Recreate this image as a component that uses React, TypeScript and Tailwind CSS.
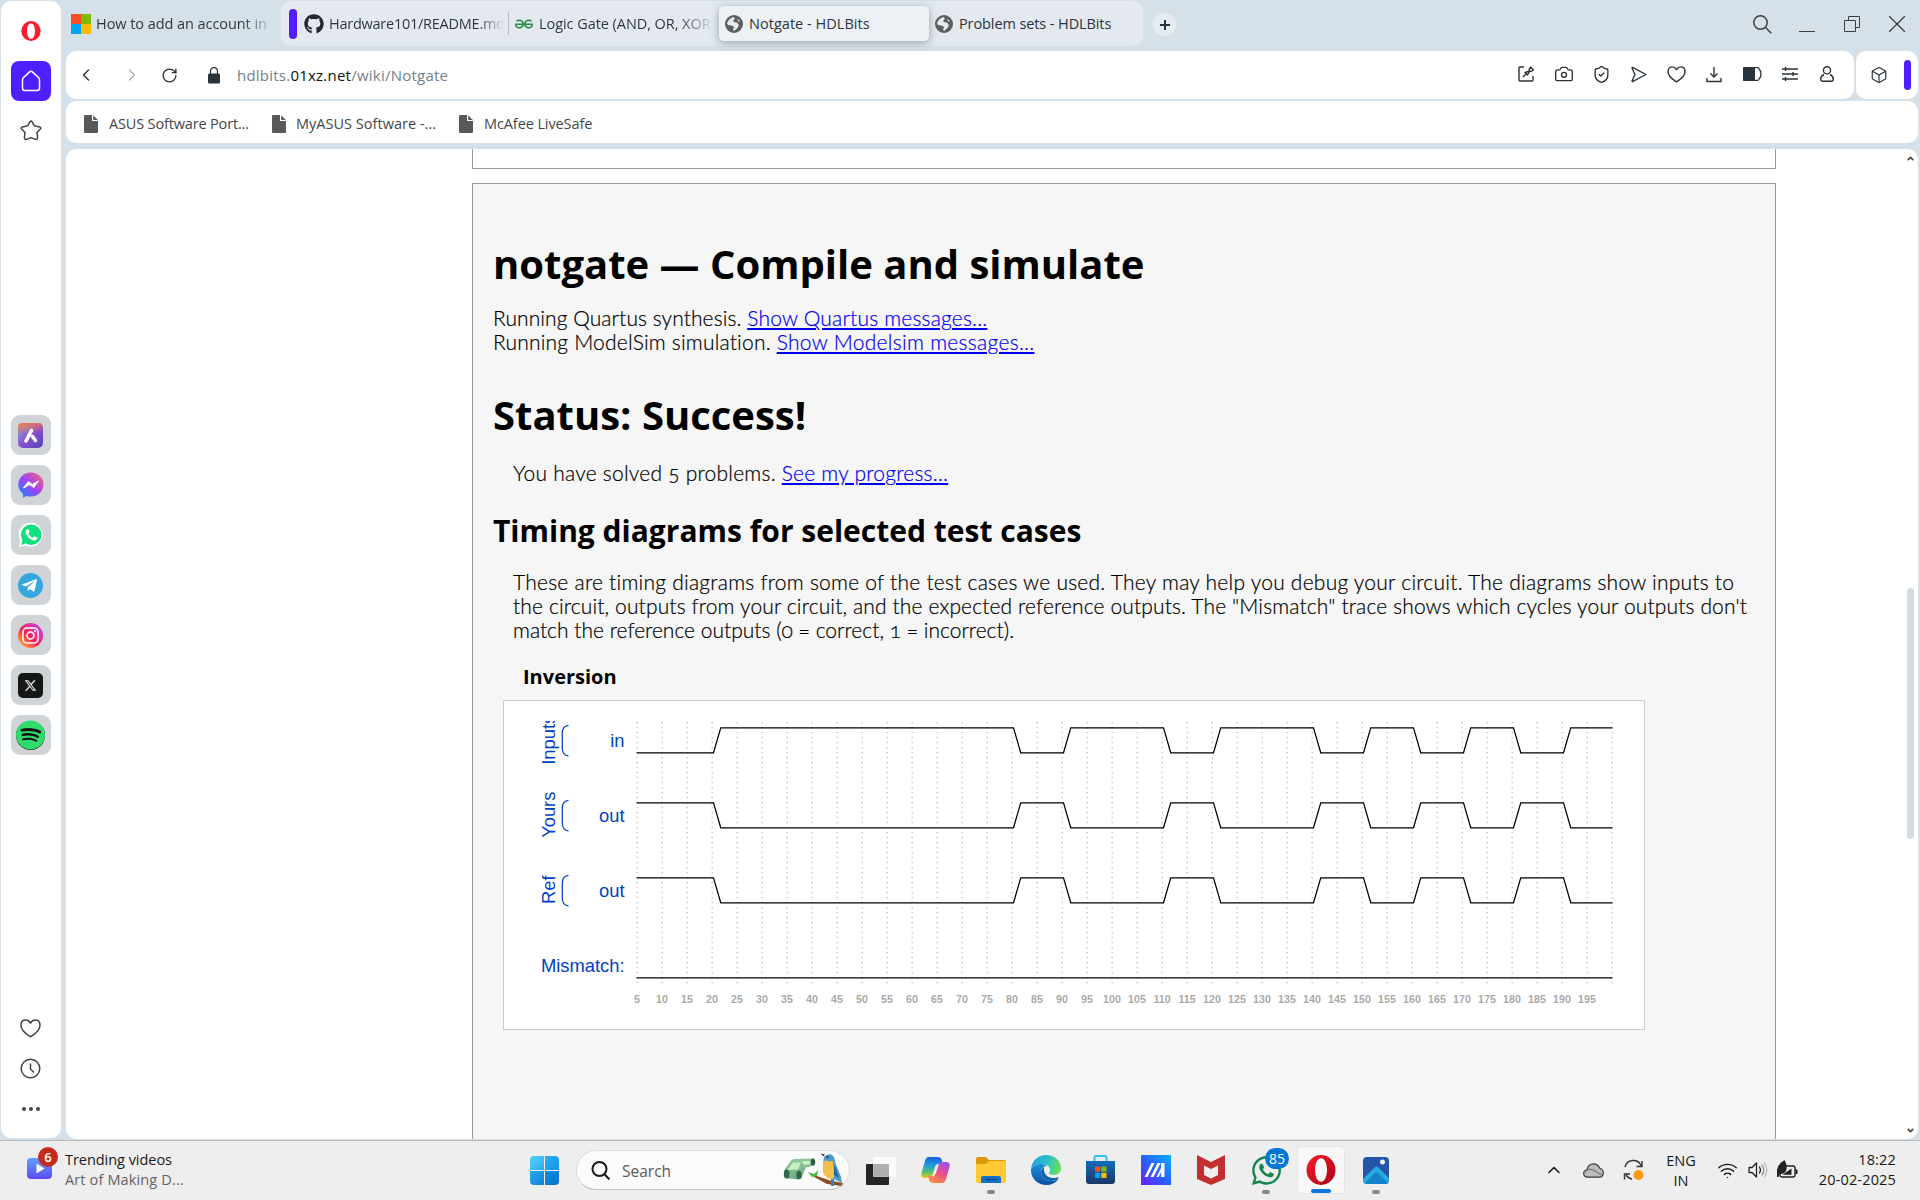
import React from "react";
import {
  ChevronLeft, ChevronRight, RotateCw, Camera, ShieldCheck,
  Box, ChevronUp, Wifi,
} from "lucide-react";
import { FaGithub, FaWhatsapp, FaTelegramPlane, FaInstagram, FaSpotify } from "react-icons/fa";
import { FaXTwitter } from "react-icons/fa6";
import { SiGeeksforgeeks } from "react-icons/si";

const ui = "font-['Open_Sans','Noto_Sans',sans-serif]";

/* ---------- small drawings ---------- */

function OperaRing({ size }: { size: number }) {
  return (
    <svg width={size} height={size} viewBox="0 0 30 30">
      <defs>
        <linearGradient id={`op${size}`} x1="0" y1="0" x2="1" y2="1">
          <stop offset="0" stopColor="#ff1b2d" />
          <stop offset="1" stopColor={size > 24 ? "#a70014" : "#ff1b2d"} />
        </linearGradient>
      </defs>
      <path fillRule="evenodd" fill={`url(#op${size})`} d="M15 0a14.5 15 0 1 0 0 30a14.5 15 0 1 0 0-30zM15 3.2c3.8 0 6 5.4 6 11.800s-2.200 11.800-6 11.800s-6-5.400-6-11.800s2.200-11.800 6-11.800z" />
    </svg>
  );
}

function Globe() {
  return (
    <svg width="18" height="18" viewBox="0 0 18 18" className="shrink-0">
      <circle cx="9" cy="9" r="9" fill="#5c5e60" />
      <path d="M2 8c1.500-3 4-5.500 6.500-6l1.500 1.500-2 2.500 1.500 1.200 2.500.3 1.800 2.500-1 2.800-3.800 3.200-1-1.500 1.200-2.500-2.700-1.500L3 10z" fill="#e6ebf0" />
      <path d="M12 3.500l3 2.500-1.500.8z" fill="#e6ebf0" />
    </svg>
  );
}

function FileIcon() {
  return (
    <svg width="14" height="18" viewBox="0 0 14 18" className="shrink-0">
      <path d="M1 0h7v6h6v11a1 1 0 0 1-1 1H1a1 1 0 0 1-1-1V1a1 1 0 0 1 1-1z" fill="#58595b" />
      <path d="M9.200.2L13.900 5H9.200z" fill="#58595b" />
    </svg>
  );
}

/* ---------- sidebar ---------- */

function Tile({ children }: { children: React.ReactNode }) {
  return <div className="flex size-10 items-center justify-center rounded-[9px] bg-[#d0d4d7]">{children}</div>;
}

function Sidebar() {
  return (
    <div className="ml-px mt-px flex h-[1137px] w-[60px] shrink-0 flex-col items-center rounded-[10px] bg-white pr-px text-[#3d464d]">
      <div className="mt-5 h-5"><OperaRing size={20} /></div>
      <div className="mt-5 flex size-10 items-center justify-center rounded-lg bg-[#4f1fff]">
        <svg width="20" height="22" viewBox="0 0 20 22" fill="none" stroke="#fff" strokeWidth="1.500" strokeLinejoin="round">
          <path d="M8.900 1.600Q10 .7 11.100 1.600L17.500 7.500Q18.500 8.500 18.500 10V18Q18.500 20.500 16 20.500H4Q1.500 20.500 1.500 18V10Q1.500 8.500 2.500 7.500Z" />
        </svg>
      </div>
      <svg className="mt-[19px]" width="22" height="21" viewBox="0 0 22 21" fill="none" stroke="currentColor" strokeWidth="1.500" strokeLinejoin="round">
        <path d="M9.900 1.800Q11 .4 12.100 1.800L14.200 5.700L19.600 6.900Q21.600 7.500 20.300 9L17 12.400L17.600 17.600Q17.600 20 15.400 19.400L11 17.600L6.600 19.400Q4.400 20 4.400 17.600L5 12.400L1.700 9Q.4 7.500 2.400 6.900L7.800 5.700Z" />
      </svg>
      <div className="mt-[274px] flex flex-col gap-2.5">
        <Tile>
          <span className="flex size-[25px] items-center justify-center rounded-[5px] bg-linear-135 from-[#58b5ea] via-[#8a4fd0] to-[#4b46b8]">
            <svg width="25" height="25" viewBox="0 0 25 25">
              <defs><linearGradient id="ar" x1=".4" y1="0" x2=".6" y2="1"><stop stopColor="#ff7040" stopOpacity=".85" /><stop offset=".45" stopColor="#ff7040" stopOpacity="0" /></linearGradient></defs>
              <rect width="25" height="25" rx="4" fill="url(#ar)" />
              <path d="M13.500 7.500L8 18M14.500 13.500L17.500 17.500" stroke="#fff" strokeWidth="3.600" strokeLinecap="round" />
            </svg>
          </span>
        </Tile>
        <Tile>
          <svg width="26" height="26" viewBox="0 0 26 26">
            <defs><linearGradient id="ms" x1="0" y1="1" x2="1" y2="0"><stop stopColor="#0a8cff" /><stop offset=".5" stopColor="#a043f5" /><stop offset="1" stopColor="#ff6968" /></linearGradient></defs>
            <path d="M13 .5a12.500 12 0 0 1 0 24c-1.500 0-2.800-.2-4-.6L5 25.500V22A12 12 0 0 1 13 .5z" fill="url(#ms)" />
            <path d="M5.500 16L10.300 9.500L14.300 12.500L20.500 9L15.700 15.500L11.700 12.500Z" fill="#fff" stroke="#fff" strokeLinejoin="round" />
          </svg>
        </Tile>
        <Tile>
          <svg width="26" height="26" viewBox="0 0 26 26">
            <path d="M1 25L2.500 19A12 12 0 1 1 7.500 23.500Z" fill="#fff" />
            <circle cx="13.200" cy="12.800" r="10.300" fill="#12e07c" />
            <path d="M3 23l1.500-5 3.500 3.500z" fill="#12e07c" />
            <path d="M9.500 7.200c-1.500.5-2.300 2-1.700 4 1.200 3.600 4.200 6.400 8 7.200 2 .3 3.300-.7 3.600-2.600l-3-1.600-1.600 1.500c-2-.8-3.500-2.300-4.300-4.200l1.100-1.300-1-2.900z" fill="#fff" />
          </svg>
        </Tile>
        <Tile>
          <span className="flex size-[25px] items-center justify-center rounded-full bg-[#35a6de] pr-0.5 text-white"><FaTelegramPlane size={17} /></span>
        </Tile>
        <Tile>
          <span className="flex size-[25px] items-center justify-center rounded-full bg-linear-to-tr from-[#ffb020] via-[#f9134f] via-45% to-[#c01cff] text-white"><FaInstagram size={19} /></span>
        </Tile>
        <Tile>
          <span className="flex size-[25px] items-center justify-center rounded-[5px] bg-[#141716] text-[#e8e8e8]"><FaXTwitter size={13} /></span>
        </Tile>
        <Tile>
          <span className="flex size-[29px] items-center justify-center rounded-full bg-[#111] text-[#2edb6b]"><FaSpotify size={30} /></span>
        </Tile>
      </div>
      <svg className="mt-[264px]" width="21" height="19" viewBox="0 0 21 19" fill="none" stroke="currentColor" strokeWidth="1.500" strokeLinejoin="round">
        <path d="M10.500 17.800C8 16 1 12.500 1 6.200C1 3 3 1 5.700 1C8 1 9.500 2.300 10.500 4C11.500 2.300 13 1 15.300 1C18 1 20 3 20 6.200C20 12.500 13 16 10.500 17.800Z" />
      </svg>
      <svg className="mt-[20px]" width="21" height="21" viewBox="0 0 21 21" fill="none" stroke="currentColor" strokeWidth="1.500" strokeLinecap="round">
        <circle cx="10.500" cy="10.500" r="9.300" /><path d="M10.500 6v5l3 3" />
      </svg>
      <div className="mt-[28px] flex gap-[3px]">
        <i className="size-1 rounded-full bg-[#3d464d]" /><i className="size-1 rounded-full bg-[#3d464d]" /><i className="size-1 rounded-full bg-[#3d464d]" />
      </div>
    </div>
  );
}

/* ---------- tab strip ---------- */

function TabStrip() {
  return (
    <div className={`flex h-[51px] text-[14.500px] leading-5 tracking-[-0.06px] text-[#2b343b] ${ui}`}>
      <div className="flex w-[215px] items-start pl-[5px] pt-3.5">
        <div className="grid size-5 shrink-0 grid-cols-2">
          <i className="bg-[#f25022]" /><i className="bg-[#7fba00]" /><i className="bg-[#00a4ef]" /><i className="bg-[#ffb900]" />
        </div>
        <div className="ml-[5px] w-[170px] overflow-hidden whitespace-nowrap bg-linear-to-r from-[#2b343b] from-85% to-[#a9b3bb] bg-clip-text text-transparent">How to add an account in</div>
      </div>
      <div className="mt-px flex h-[45px] w-[862px] items-center rounded-[10px] bg-[#e3e9ef]">
        <div className="ml-2 h-[30px] w-2 shrink-0 rounded-full bg-[#4f1fff]" />
        <FaGithub size={20} className="ml-[7px] shrink-0 text-[#24292f]" />
        <div className="ml-[5px] mt-px w-[174px] shrink-0 overflow-hidden whitespace-nowrap bg-linear-to-r from-[#2b343b] from-85% to-[#d5dce2] bg-clip-text tracking-[-0.25px] text-transparent">Hardware101/README.md</div>
        <div className="ml-[5px] h-[23px] w-px shrink-0 bg-[#b4bbc1]" />
        <SiGeeksforgeeks size={18} className="ml-[6px] shrink-0 text-[#2f8d46]" />
        <div className="ml-1.5 mt-px w-[173px] shrink-0 overflow-hidden whitespace-nowrap bg-linear-to-r from-[#2b343b] from-80% to-[#d5dce2] bg-clip-text text-transparent">Logic Gate (AND, OR, XOR</div>
        <div className="ml-[7px] flex h-[35px] w-[210px] shrink-0 items-center gap-1.5 rounded-[5px] bg-[#edf1f6] pl-1.5 shadow-[0_2px_8px_rgba(60,75,90,0.45)]">
          <Globe /><span className="mt-px whitespace-nowrap tracking-[0.03px]">Notgate - HDLBits</span>
        </div>
        <div className="ml-1.5 flex items-center gap-1.5"><Globe /><span className="mt-px whitespace-nowrap tracking-[-0.1px]">Problem sets - HDLBits</span></div>
      </div>
      <div className="ml-2.5 mt-[13px] flex size-[23px] items-center justify-center rounded-full bg-[#e5ebf1]">
        <svg width="10" height="10" viewBox="0 0 10 10" stroke="#2b343b" strokeWidth="2"><path d="M5 0v10M0 5h10" /></svg>
      </div>
      <div className="ml-auto mr-[13px] flex h-12 items-center text-[#3a3f44]">
        <svg width="19" height="19" viewBox="0 0 19 19" fill="none" stroke="currentColor" strokeWidth="1.500"><circle cx="7.500" cy="7.500" r="6.700" /><path d="M12.300 12.300l6 6" /></svg>
        <svg className="ml-[27px]" width="16" height="16" viewBox="0 0 16 16" stroke="currentColor"><path d="M0 15.500h16" /></svg>
        <svg className="ml-[29px]" width="16" height="16" viewBox="0 0 16 16" fill="none" stroke="currentColor"><path d="M.5 4.500h11v11H.5zM4.500 4.500v-4h11v11h-4" /></svg>
        <svg className="ml-[29px]" width="16" height="16" viewBox="0 0 16 16" stroke="currentColor" strokeWidth="1.300"><path d="M0 0l16 16M16 0L0 16" /></svg>
      </div>
    </div>
  );
}

/* ---------- address and bookmark bars ---------- */

function Toolbar() {
  return (
    <div className="flex h-12 gap-[2px] text-[#2b343b]">
      <div className="flex w-[1788px] items-center rounded-[10px] bg-white">
        <ChevronLeft size={20} strokeWidth={1.7} className="ml-[10px]" />
        <ChevronRight size={20} strokeWidth={1.5} className="ml-[26px] text-[#a9b0b6]" />
        <RotateCw size={17} strokeWidth={1.9} className="ml-[19px]" />
        <svg className="ml-[30px]" width="12" height="17" viewBox="0 0 12 17"><rect y="6.500" width="12" height="10" rx="1.500" fill="#2b343b" /><path d="M2.500 7V4a3.500 3.500 0 0 1 7 0v3" fill="none" stroke="#2b343b" strokeWidth="1.300" /></svg>
        <div className={`ml-[17px] whitespace-nowrap text-[15px] leading-5 tracking-[0.23px] text-[#74818c] ${ui}`}>
          hdlbits.<span className="text-[#0c1013]">01xz.net</span>/wiki/Notgate
        </div>
        <div className="ml-auto mr-[8px] flex items-center">
          {[
            <svg key="a" width="18" height="18" viewBox="0 0 18 18" fill="none" stroke="currentColor" strokeWidth="1.400" strokeLinejoin="round"><path d="M7 2H3Q2 2 2 3V15Q2 16 3 16H15Q16 16 16 15V11" /><path d="M6 12L9 9M7.500 7L11 10.500M8.500 7.500L12.500 6L12 4.500L13.500 2L16.500 5L14 6.500L12.500 6M10.500 10L12.500 6.500" /></svg>,
            <Camera key="b" size={20} strokeWidth={1.6} />,
            <ShieldCheck key="c" size={19} strokeWidth={1.7} />,
            <svg key="d" width="16" height="17" viewBox="0 0 16 17" fill="none" stroke="currentColor" strokeWidth="1.400" strokeLinejoin="round"><path d="M1.500 1.300L15 8.500L1.500 15.700Q.8 15.500 1.200 14.500L4 8.500L1.200 2.500Q.8 1.500 1.500 1.300Z" /></svg>,
            <svg key="e" width="19" height="17" viewBox="0 0 21 19" fill="none" stroke="currentColor" strokeWidth="1.600" strokeLinejoin="round"><path d="M10.500 17.800C8 16 1 12.500 1 6.200C1 3 3 1 5.700 1C8 1 9.500 2.300 10.500 4C11.500 2.300 13 1 15.300 1C18 1 20 3 20 6.200C20 12.500 13 16 10.500 17.800Z" /></svg>,
            <svg key="f" width="16" height="17" viewBox="0 0 16 17" fill="none" stroke="currentColor" strokeWidth="1.400"><path d="M8 1v10M4.500 7.500L8 11l3.500-3.500M1 12v3.500h14V12" /></svg>,
            <svg key="g" width="19" height="14" viewBox="0 0 19 14"><path d="M1 .7H14.500Q16 .7 16.300 2.500L17.800 4.500V9.500L16.300 11.500Q16 13.300 14.500 13.300H1z" fill="none" stroke="currentColor" strokeWidth="1.300" /><rect width="12" height="14" rx="1.500" fill="currentColor" /></svg>,
            <svg key="h" width="16" height="14" viewBox="0 0 16 14" stroke="currentColor" strokeWidth="1.400"><path d="M0 2h16M0 7h16M0 12h16M3.500 0v4M11 5v4M3.500 10v4" /></svg>,
            <svg key="i" width="14" height="16" viewBox="0 0 14 16" fill="none" stroke="currentColor" strokeWidth="1.400"><circle cx="7" cy="4.300" r="3.600" /><path d="M4 8.500C2 9.500.7 11 .7 13Q.7 15.300 3 15.300H11Q13.300 15.300 13.300 13C13.300 11 12 9.500 10 8.500" /></svg>,
          ].map((icon, i) => (
            <span key={i} className="flex h-[22px] w-[37.600px] items-center justify-center pb-0.5">{icon}</span>
          ))}
        </div>
      </div>
      <div className="flex w-[62px] items-center rounded-[10px] bg-white">
        <Box size={18} strokeWidth={1.6} className="ml-[14px]" />
        <div className="ml-[16px] h-[30px] w-[7px] rounded-full bg-[#4f1fff]" />
      </div>
    </div>
  );
}

function Bookmarks() {
  return (
    <div className={`mt-[2px] flex h-[42px] items-center rounded-[10px] bg-white pl-[18px] pt-1 text-[14.500px] leading-5 text-[#3f474d] ${ui}`}>
      <div className="flex w-[188px] items-center gap-[11px]"><FileIcon /><span className="tracking-[-0.16px]">ASUS Software Port...</span></div>
      <div className="flex w-[187px] items-center gap-[10px]"><FileIcon /><span className="tracking-[0.02px]">MyASUS Software -...</span></div>
      <div className="flex items-center gap-[11px]"><FileIcon /><span className="tracking-[-0.1px]">McAfee LiveSafe</span></div>
    </div>
  );
}

/* ---------- timing diagram ---------- */

const X0 = 133;
const STEP = 25;
const INPUT_EDGES = [20, 80, 90, 110, 120, 140, 150, 160, 170, 180, 190];
const toX = (t: number) => X0 + ((t - 5) / 5) * STEP;

function wavePath(high: boolean, top: number, edges: number[]) {
  let level = high;
  let d = "";
  const y = (h: boolean) => (h ? top : top + 25);
  for (let t = 5; t < 200; t += 2.5) {
    const a = toX(t);
    const b = toX(t + 2.5);
    if (edges.includes(t)) {
      d += `M${a},${y(level)}h1.500L${a + 8.75},${y(!level)}H${b}`;
      level = !level;
    } else {
      d += `M${a},${y(level)}H${b}`;
    }
  }
  return d;
}

function TimingDiagram() {
  const ticks = Array.from({ length: 40 }, (_, i) => 5 + i * 5);
  const groups = [
    { name: "Inputs", signal: "in", top: 26.75, high: false },
    { name: "Yours", signal: "out", top: 101.75, high: true },
    { name: "Ref", signal: "out", top: 176.75, high: true },
  ];
  return (
    <svg width="1140" height="328" viewBox="0 0 1140 328" className="block font-['Liberation_Sans',Arial,sans-serif]">
      <defs><clipPath id="lane"><rect x="0" y="20" width="1140" height="308" /></clipPath></defs>
      <g clipPath="url(#lane)">
        {ticks.map((t) => (
          <line key={t} x1={toX(t) + 0.2} x2={toX(t) + 0.2} y1="20" y2="283" stroke="#b8b8b8" strokeWidth="1.250" strokeDasharray="1.250 3.750" strokeDashoffset="-1" />
        ))}
        {groups.map((g) => (
          <g key={g.name}>
            <text transform={`translate(50.500 ${g.top + 12}) rotate(-90)`} textAnchor="middle" fontSize="18.330" fill="#0041c4">{g.name}</text>
            <path d={`M64.500,${g.top - 2.5}c-4,0 -6.200,4 -6.200,7.500v15.500c0,4 2.200,7.500 6.200,7.500`} fill="none" stroke="#0041c4" strokeWidth="1.250" />
            <text x="120.500" y={g.top + 19.2} textAnchor="end" fontSize="18.330" fill="#0041c4">{g.signal}</text>
            <path d={wavePath(g.high, g.top, INPUT_EDGES)} fill="none" stroke="#000" strokeWidth="1.250" strokeLinecap="round" />
          </g>
        ))}
        <text x="120.500" y="271" textAnchor="end" fontSize="18.330" fill="#0041c4">Mismatch:</text>
        <path d={wavePath(false, 251.75, [])} fill="none" stroke="#000" strokeWidth="1.250" strokeLinecap="round" />
        {ticks.slice(0, 39).map((t) => (
          <text key={t} x={toX(t)} y="302" textAnchor="middle" fontSize="10.670" fontWeight="700" fill="#aaa">{t}</text>
        ))}
      </g>
    </svg>
  );
}

/* ---------- web page ---------- */

const link = "text-[#0000ee] underline decoration-[1.500px] underline-offset-2";

function WebPage() {
  return (
    <div className="mt-[6px] flex h-[990px] shrink-0 overflow-hidden rounded-[10px] bg-white text-black">
      <div className="ml-[406px] flex w-[1304px] flex-col">
        <div className="h-5 shrink-0 border border-t-0 border-[#999]" />
        <div className="mt-[14px] grow border border-b-0 border-[#999] bg-[#f6f6f6] px-5 font-['Lato',sans-serif] text-[21px] font-light oldstyle-nums leading-6 [font-variant-ligatures:none]">
          <h1 className="mt-[53px] whitespace-nowrap font-['Open_Sans',sans-serif] text-[40px] font-bold leading-[54px]">notgate — Compile and simulate</h1>
          <div className="mt-[15px] whitespace-nowrap tracking-[0.08px] [-webkit-text-stroke:0.2px]">Running Quartus synthesis. <span className={`tracking-[0.2px] ${link}`}>Show Quartus messages...</span></div>
          <div className="whitespace-nowrap tracking-[0.2px] [-webkit-text-stroke:0.2px]">Running ModelSim simulation. <span className={`tracking-[0.3px] ${link}`}>Show Modelsim messages...</span></div>
          <h1 className="mt-[34px] whitespace-nowrap font-['Open_Sans',sans-serif] text-[40px] font-bold leading-[54px]">Status: Success!</h1>
          <p className="ml-5 mt-[19px] whitespace-nowrap tracking-[0.23px] [-webkit-text-stroke:0.2px]">You have solved 5 problems. <span className={link}>See my progress...</span></p>
          <h2 className="mt-[25px] whitespace-nowrap font-['Open_Sans',sans-serif] text-[30px] font-bold leading-[41px]">Timing diagrams for selected test cases</h2>
          <p className="ml-5 mt-[19px] whitespace-nowrap [-webkit-text-stroke:0.2px]">
            <span className="block tracking-[0.24px]">These are timing diagrams from some of the test cases we used. They may help you debug your circuit. The diagrams show inputs to</span>
            <span className="block tracking-[0.13px]">the circuit, outputs from your circuit, and the expected reference outputs. The "Mismatch" trace shows which cycles your outputs don't</span>
            <span className="block">match the reference outputs (0 = correct, 1 = incorrect).</span>
          </p>
          <h3 className="ml-[30px] mt-[21px] font-['Open_Sans',sans-serif] text-[20px] font-bold leading-[27px]">Inversion</h3>
          <div className="ml-[10px] mt-[10px] w-[1142px] border border-[#ccc] bg-white lining-nums"><TimingDiagram /></div>
        </div>
      </div>
      <div className="ml-auto mr-[3px] flex w-[9px] flex-col items-center justify-between pb-1 pt-[5px] text-[#505050]">
        <ChevronUp size={9} strokeWidth={5} />
        <div className="mt-[137px] h-[251px] w-[7px] rounded-full bg-[#d2dce4]" />
        <ChevronUp size={9} strokeWidth={5} className="rotate-180" />
      </div>
    </div>
  );
}

/* ---------- taskbar ---------- */

function Slot({ w, mark, children }: { w: string; mark?: boolean; children: React.ReactNode }) {
  return (
    <div className={`relative flex h-12 shrink-0 items-center justify-center ${w}`}>
      {children}
      {mark && <span className="absolute bottom-0 left-1/2 h-1 w-2 -translate-x-1/2 rounded-full bg-[#868686]" />}
    </div>
  );
}

function Taskbar() {
  return (
    <div className={`flex h-[60px] items-start border-t border-[#b4b8bc] bg-[#eeeeee] pt-[5px] text-[14.500px] leading-5 text-[#1a1a1a] ${ui}`}>
      <div className="flex w-[520px] shrink-0 pl-[27px]">
        <div className="relative mt-[11px] h-[23px] w-[25px]">
          <svg width="25" height="23" viewBox="0 0 25 23"><defs><linearGradient id="tv" x1="0" y1="0" x2="0" y2="1"><stop stopColor="#60a0ff" /><stop offset="1" stopColor="#5b4cf0" /></linearGradient></defs><rect y="1" width="25" height="21" rx="4" fill="url(#tv)" /><path d="M9.500 6.500l8 5-8 5z" fill="#fff" /></svg>
          <span className="absolute -top-[10px] left-[11px] flex size-5 items-center justify-center rounded-full bg-[#c42b1c] text-[13px] font-semibold text-white">6</span>
        </div>
        <div className="ml-[13px] mt-1 whitespace-nowrap"><div className="tracking-[-0.04px]">Trending videos</div><div className="tracking-[0.14px] text-[#636363]">Art of Making D...</div></div>
      </div>
      <Slot w="w-[49px]">
        <div className="grid size-[29px] grid-cols-2 gap-px">
          <i className="rounded-tl-sm bg-linear-135 from-[#52d0fb] to-[#2aaef0]" /><i className="rounded-tr-sm bg-linear-135 from-[#2fb2f2] to-[#1590e2]" /><i className="rounded-bl-sm bg-linear-135 from-[#2aa8ee] to-[#0c84da]" /><i className="rounded-br-sm bg-linear-135 from-[#1490e2] to-[#0070cc]" />
        </div>
      </Slot>
      <div className="ml-[7px] mt-1 flex h-10 w-[274px] shrink-0 items-center rounded-full border border-[#dcdcdc] border-b-[#c4c4c4] bg-[#fbfbfb] pl-[14px]">
        <svg width="19" height="19" viewBox="0 0 19 19" fill="none" stroke="currentColor" strokeWidth="2" strokeLinecap="round"><circle cx="8.500" cy="8" r="7" /><path d="M13.500 13.200l4.300 4.500" /></svg>
        <span className="ml-[12px] mt-px text-[15.500px] text-[#5a5a5a]">Search</span>
        <svg className="ml-auto mr-[5px]" width="62" height="34" viewBox="0 0 62 34">
          <defs>
            <linearGradient id="bn" x1="0" y1="0" x2="0" y2="1"><stop stopColor="#8fc79a" /><stop offset="1" stopColor="#6fae85" /></linearGradient>
          </defs>
          <path d="M2.500 17L9 7.500Q11 5.500 14 6L29 5.500Q34 7 32 12.500L24 14.500L19.500 24.500Q17 27.500 13 26L5 25.500Q1 22 2.500 17z" fill="url(#bn)" />
          <path d="M5 17L11 9.500h8l-3 7z M20 8h8v3l-6 1z" fill="#c8f0c4" />
          <ellipse cx="4.600" cy="21" rx="2.800" ry="4.500" fill="#2f6a4c" /><ellipse cx="17" cy="22" rx="2.800" ry="4.300" fill="#2f6a4c" /><ellipse cx="31" cy="9" rx="2.200" ry="3.600" fill="#2f5a48" />
          <path d="M28 21l10 3 10 3.500 13 2.500-2 3-14-2-11-6z" fill="#8a4e24" />
          <path d="M26 19l6 2 4-4-1 6-5 1z" fill="#4db83f" />
          <path d="M42 4Q46 0 50 2Q53 4 53 9L59 24L60 30L52 26L44 21Q40 12 42 4z" fill="#4a9cd0" />
          <path d="M50 8l4 8 3 9-6-4z" fill="#25639c" />
          <path d="M43 7Q47 9 51 8Q53 17 51.500 26Q44 27 41 19.500Q40 13 43 7z" fill="#f0c050" />
          <path d="M41.500 3.500L38.500 .5L43 1.500z" fill="#4a3a30" /><circle cx="45.500" cy="4" r="1.100" fill="#202830" />
          <path d="M49 26v7l3 0v-7z" fill="#3f7fb0" />
        </svg>
      </div>
      <Slot w="ml-[9px] w-[43px]">
        <svg width="30" height="29" viewBox="0 0 30 29"><rect y="8" width="23" height="21" rx="1" fill="#262626" /><rect x="7" y="1" width="23" height="20" rx="1" fill="#fff" fillOpacity=".75" /><rect x="7.500" y="8" width="15.500" height="12.500" fill="#b0b0b0" /></svg>
      </Slot>
      <Slot w="ml-[9px] w-[48px]">
        <svg width="29" height="26" viewBox="0 0 29 26">
          <defs>
            <linearGradient id="ca" x1=".3" y1="0" x2=".3" y2="1"><stop stopColor="#1b60e0" /><stop offset=".4" stopColor="#1f9ae0" /><stop offset=".7" stopColor="#4fc070" /><stop offset="1" stopColor="#f0c818" /></linearGradient>
            <linearGradient id="cb" x1=".8" y1="0" x2=".3" y2="1"><stop stopColor="#9a50f0" /><stop offset=".5" stopColor="#e8508a" /><stop offset="1" stopColor="#ff9040" /></linearGradient>
          </defs>
          <path d="M8 0H17Q20 0 21 3.500L22 7H17.500Q15 7 14 10L11.500 18Q10.500 21 7.500 21H3.500Q-.5 20.500 .5 16L4 4Q5 0 8 0z" fill="url(#ca)" />
          <path d="M21 26H12Q9 26 8 22.500L7 19H11.500Q14 19 15 16L17.500 8Q18.500 5 21.500 5H25.500Q29.500 5.500 28.500 10L25 22Q24 26 21 26z" fill="url(#cb)" />
          <path d="M17 7L12.500 20H11.500L15 8.500z" fill="#eee" />
        </svg>
      </Slot>
      <Slot w="ml-[8px] w-[48px]" mark>
        <svg width="30" height="27" viewBox="0 0 30 27"><path d="M0 2q0-2 2-2h8l3 3h15q2 0 2 2v5H0z" fill="#dc9a0a" /><path d="M0 7h10l3-3h15q2 0 2 2v18q0 2-2 2H2q-2 0-2-2z" fill="#ffc933" /><path d="M5 26v-5q0-2 2-2h16q2 0 2 2v5z" fill="#1273c6" /><path d="M9 22.500h12" stroke="#0a4c8c" strokeWidth="1.500" /></svg>
      </Slot>
      <Slot w="ml-[7px] w-[48px]">
        <svg width="30" height="30" viewBox="0 0 30 30">
          <defs>
            <linearGradient id="ea" x1="0" y1="0" x2="1" y2=".2"><stop stopColor="#1e9be0" /><stop offset=".6" stopColor="#2cc3c8" /><stop offset="1" stopColor="#62dc62" /></linearGradient>
            <linearGradient id="eb" x1="0" y1="0" x2="0" y2="1"><stop stopColor="#1b8fdc" /><stop offset="1" stopColor="#0c50a0" /></linearGradient>
          </defs>
          <path d="M0 14C1 5 8 0 15 0c9 0 15 6 15 13 0 4-3 7-7 7-3 0-5-1-5-2 0-1 1-1 1-3 0-4-4-6-8-6C6 9 2 11 0 14z" fill="url(#ea)" />
          <path d="M0 14c2-3 6-5 11-5 2 0 4 1 5 2-4 0-6 3-6 6 0 5 4 9 10 9 3 0 5-1 7-2-2 4-7 6-12 6C7 30-.5 24 0 14z" fill="url(#eb)" />
          <path d="M13 12c-2 2-3 3-3 5 0 5 4 9 10 9 3 0 5-1 7-2 1-1 0-2-1-1.500-7 2-14-1.500-13-10.500z" fill="#0f63b5" />
        </svg>
      </Slot>
      <Slot w="ml-[6px] w-[48px]">
        <svg width="29" height="30" viewBox="0 0 29 30"><defs><linearGradient id="st" x1="0" y1="0" x2="0" y2="1"><stop stopColor="#0f6dbd" /><stop offset="1" stopColor="#1c3766" /></linearGradient></defs><path d="M8.500 6V2.500q0-1.500 1.500-1.500h9q1.500 0 1.500 1.500V6" fill="none" stroke="#2fc0f5" strokeWidth="2" /><path d="M0 6h29v20q0 3-3 3H3q-3 0-3-3z" fill="url(#st)" /><path d="M9 11.500h5.200v5.200H9z" fill="#f25022" /><path d="M15.300 11.500h5.200v5.200h-5.200z" fill="#7fba00" /><path d="M9 17.800h5.200V23H9z" fill="#00a4ef" /><path d="M15.300 17.800h5.200V23h-5.200z" fill="#ffb900" /></svg>
      </Slot>
      <Slot w="ml-[8px] w-[48px]">
        <svg width="30" height="30" viewBox="0 0 30 30"><defs><linearGradient id="my" x1="0" y1="1" x2="1" y2="0"><stop stopColor="#6a1cff" /><stop offset=".5" stopColor="#2a62ff" /><stop offset="1" stopColor="#08b0ff" /></linearGradient></defs><rect width="30" height="30" fill="url(#my)" /><path d="M3.500 22L10.500 8H13.500L6.500 22zM9.500 22L16.500 8H19.500L12.500 22zM20 8h3.500v14h-3.500z" fill="#fff" /><path d="M15.500 22L20 13v4l-2.300 5z" fill="#fff" /></svg>
      </Slot>
      <Slot w="ml-[7px] w-[48px]">
        <svg width="28" height="30" viewBox="0 0 28 30"><path d="M0 0l14 7L28 0v24l-14 6L0 24zM7 10.500v9.500l7 3.500 7-3.500v-9.500l-7 3.500z" fill="#c22f31" /></svg>
      </Slot>
      <Slot w="ml-[7px] w-[48px]" mark>
        <FaWhatsapp size={33} className="text-[#14854d]" />
        <span className="absolute left-[23px] top-[2px] flex h-[21px] w-6 items-center justify-center rounded-full bg-[#0078d7] text-[14px] text-white">85</span>
      </Slot>
      <Slot w="ml-[7px] w-[48px] rounded-[5px] border border-[#e4e4e4] bg-[#f8f8f8]">
        <OperaRing size={30} />
        <span className="absolute bottom-0 left-[13px] h-1 w-5 rounded-full bg-[#0b78d8]" />
      </Slot>
      <Slot w="ml-[7px] w-[48px]" mark>
        <svg width="26" height="27" viewBox="0 0 26 27"><rect width="26" height="27" rx="4" fill="#2455a8" /><path d="M0 22L12 10q1.500-1.200 3 0L26 21v2q0 4-4 4H4q-4 0-4-4z" fill="#27a9e0" /><path d="M2 26l10-10q1.500-1.200 3 0l10 10q-1 1-3 1H4z" fill="#1583c9" /><circle cx="19.500" cy="5" r="2.500" fill="#f2f6fa" /></svg>
      </Slot>
      <div className="ml-auto mr-6 flex h-12 items-center whitespace-nowrap">
        <ChevronUp size={20} strokeWidth={1.9} />
        <svg className="ml-[19px]" width="21" height="15" viewBox="0 0 21 15"><path d="M5 14.200Q.7 14 .7 10.500Q.7 7.500 4 6.800Q5 .8 10.500.8Q15 .8 16.500 5Q20.300 6.500 20.300 10Q20.300 14.200 16 14.200Z" fill="#bcbcbc" stroke="#3a3a3a" strokeWidth="1.200" /><path d="M1.500 9Q5 5 10 7L19 12" fill="none" stroke="#777" strokeWidth="1.200" /></svg>
        <svg className="ml-[19px]" width="22" height="22" viewBox="0 0 22 22" fill="none" stroke="#333" strokeWidth="1.400"><path d="M2 8a8.500 8.500 0 0 1 16-1.500M19 2v5.500h-5.500M9 20a9 9 0 0 1-6-4M1.500 20.500V15H7" /><circle cx="15.500" cy="16" r="5" fill="#ff9a0e" stroke="none" /></svg>
        <div className="ml-[20px] mt-px w-[32px] text-center"><div>ENG</div><div>IN</div></div>
        <Wifi size={21} strokeWidth={1.7} className="ml-[20px]" />
        <svg className="ml-[10px]" width="20" height="20" viewBox="0 0 20 20" fill="none" stroke="#222" strokeWidth="1.300" strokeLinejoin="round" strokeLinecap="round"><path d="M1 7.500H4L8.500 3V17L4 12.500H1Z" /><path d="M11.500 7q2 3 0 6" /><path d="M14 5q3.500 5 0 10" stroke="#888" /><path d="M16.300 3q5 7 0 14" stroke="#bbb" /></svg>
        <svg className="ml-[9px]" width="21" height="20" viewBox="0 0 21 20"><rect x="3" y="6" width="15" height="11" rx="2" fill="none" stroke="#222" strokeWidth="1.400" /><path d="M19.500 9.500v4.500" stroke="#222" strokeWidth="2" /><path d="M0 13Q-1 5 7.500 0Q11 6 9 11Q7 14.500 2.500 14L1.500 17H0z" fill="#222" /><path d="M5.500 14.800h9V8.500z" fill="#222" /></svg>
        <div className="ml-[16px] w-[82px] text-right tracking-[0.16px]"><div>18:22</div><div>20-02-2025</div></div>
      </div>
    </div>
  );
}

export default function App() {
  return (
    <div className="flex h-[1200px] w-[1920px] flex-col overflow-hidden bg-[#d6e0e8]">
      <div className="flex h-[1140px] shrink-0">
        <Sidebar />
        <div className="ml-[5px] flex w-[1852px] flex-col">
          <TabStrip />
          <Toolbar />
          <Bookmarks />
          <WebPage />
        </div>
      </div>
      <Taskbar />
    </div>
  );
}
